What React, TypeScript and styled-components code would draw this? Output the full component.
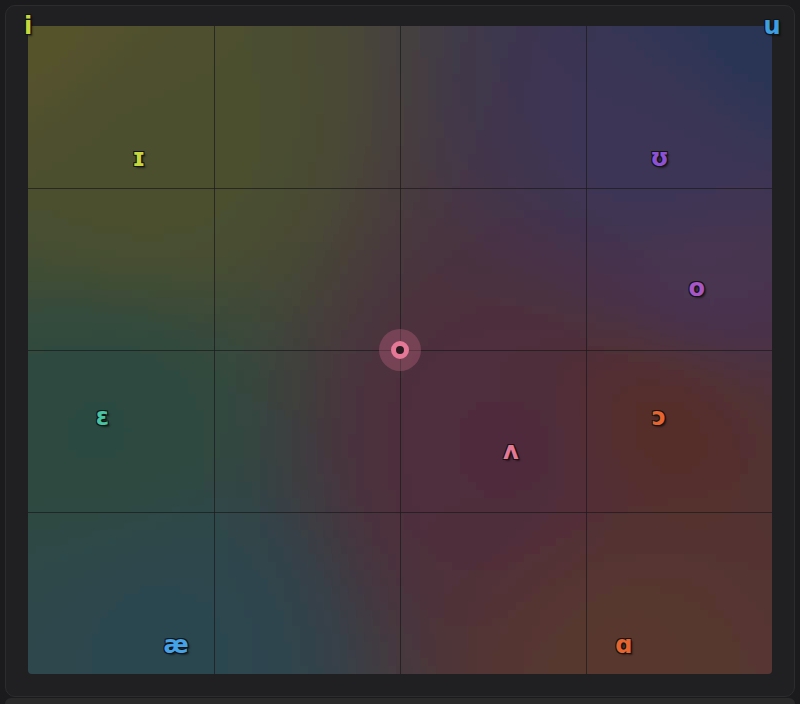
import styled, { createGlobalStyle } from "styled-components";

const GlobalStyle = createGlobalStyle`
  html, body {
    margin: 0;
    background: #1b1b1d;
  }
  body {
    font-family: "DejaVu Sans", "Noto Sans", sans-serif;
  }
`;

const PLOT_W = 744;
const PLOT_H = 648;
const CELL = 8;

type RGB = [number, number, number];

interface Vowel {
  symbol: string;
  x: number;
  y: number;
  color: string;
  tint: RGB;
  pull: number;
}

// positions are fractions of the chart: x = backness, y = openness
const vowels: Vowel[] = [
  { symbol: "i", x: 0, y: 0, color: "#c9d83e", tint: [86, 82, 44], pull: 1 },
  { symbol: "u", x: 1, y: 0, color: "#3d9fe0", tint: [40, 54, 86], pull: 1 },
  { symbol: "ɪ", x: 0.149, y: 0.204, color: "#c8d63e", tint: [76, 80, 46], pull: 1.6 },
  { symbol: "ʊ", x: 0.849, y: 0.204, color: "#8c52d2", tint: [60, 52, 86], pull: 1 },
  { symbol: "o", x: 0.899, y: 0.404, color: "#a855c6", tint: [72, 52, 82], pull: 0.9 },
  { symbol: "ɛ", x: 0.1, y: 0.603, color: "#45c3a2", tint: [44, 74, 64], pull: 1.2 },
  { symbol: "ʌ", x: 0.649, y: 0.656, color: "#e47896", tint: [80, 44, 60], pull: 1.7 },
  { symbol: "ɔ", x: 0.848, y: 0.603, color: "#e8642e", tint: [86, 46, 40], pull: 1 },
  { symbol: "æ", x: 0.199, y: 0.955, color: "#44a2e8", tint: [44, 70, 80], pull: 1.2 },
  { symbol: "ɑ", x: 0.801, y: 0.955, color: "#e8642e", tint: [88, 56, 46], pull: 1 },
];

const blendAt = (px: number, py: number): string => {
  let r = 0;
  let g = 0;
  let b = 0;
  let total = 0;
  for (const v of vowels) {
    const dx = px - v.x * PLOT_W;
    const dy = py - v.y * PLOT_H;
    const w = v.pull / Math.pow(dx * dx + dy * dy + 5000, 1.9);
    r += v.tint[0] * w;
    g += v.tint[1] * w;
    b += v.tint[2] * w;
    total += w;
  }
  return `rgb(${Math.round(r / total)},${Math.round(g / total)},${Math.round(b / total)})`;
};

const buildCells = () => {
  const cells: { x: number; y: number; fill: string }[] = [];
  for (let y = -3 * CELL; y < PLOT_H + 3 * CELL; y += CELL) {
    for (let x = -3 * CELL; x < PLOT_W + 3 * CELL; x += CELL) {
      cells.push({ x, y, fill: blendAt(x + CELL / 2, y + CELL / 2) });
    }
  }
  return cells;
};

const cells = buildCells();

const Page = styled.div`
  padding: 5px 5px 0;
`;

const Panel = styled.div`
  box-sizing: border-box;
  width: 790px;
  height: 692px;
  padding: 20px 22px 22px;
  border: 1px solid #2c2c2f;
  border-radius: 10px;
  background: #202022;
`;

const Plot = styled.div`
  position: relative;
  width: ${PLOT_W}px;
  height: ${PLOT_H}px;
`;

const Field = styled.svg`
  display: block;
  border-radius: 4px;
  overflow: hidden;
`;

const Label = styled.span<{ $color: string }>`
  position: absolute;
  transform: translate(-50%, -50%);
  font-size: 24px;
  font-weight: bold;
  line-height: 1;
  color: ${({ $color }) => $color};
  text-shadow:
    -1px -1px 0 #141414,
    1px -1px 0 #141414,
    -1px 1px 0 #141414,
    1px 1px 0 #141414,
    2px 2px 2px rgba(0, 0, 0, 0.5);
  user-select: none;
`;

const Marker = styled.div`
  position: absolute;
  left: 50%;
  top: 50%;
  width: 42px;
  height: 42px;
  transform: translate(-50%, -50%);
  border-radius: 50%;
  background: rgba(226, 112, 146, 0.28);
  display: flex;
  align-items: center;
  justify-content: center;
`;

const MarkerRing = styled.div`
  box-sizing: border-box;
  width: 18px;
  height: 18px;
  border-radius: 50%;
  border: 5px solid #e47896;
  background: #2a1a20;
`;

const Footer = styled.div`
  margin-top: 1px;
  height: 6px;
  border-radius: 6px 6px 0 0;
  background: #2a2a2b;
`;

const gridLines = [0.25, 0.5, 0.75];

const App = () => (
  <Page>
    <GlobalStyle />
    <Panel>
      <Plot>
        <Field width={PLOT_W} height={PLOT_H} viewBox={`0 0 ${PLOT_W} ${PLOT_H}`}>
          <defs>
            <filter id="soften" x="-5%" y="-5%" width="110%" height="110%">
              <feGaussianBlur stdDeviation="6" />
            </filter>
          </defs>
          <g filter="url(#soften)" shapeRendering="crispEdges">
            {cells.map((c) => (
              <rect key={`${c.x}-${c.y}`} x={c.x} y={c.y} width={CELL} height={CELL} fill={c.fill} />
            ))}
          </g>
          <g stroke="#1c1c1e" strokeOpacity={0.75} strokeWidth={1} shapeRendering="crispEdges">
            {gridLines.map((f) => (
              <line key={`v${f}`} x1={Math.round(f * PLOT_W) + 0.5} y1={0} x2={Math.round(f * PLOT_W) + 0.5} y2={PLOT_H} />
            ))}
            {gridLines.map((f) => (
              <line key={`h${f}`} x1={0} y1={Math.round(f * PLOT_H) + 0.5} x2={PLOT_W} y2={Math.round(f * PLOT_H) + 0.5} />
            ))}
          </g>
        </Field>
        <Marker>
          <MarkerRing />
        </Marker>
        {vowels.map((v) => (
          <Label key={v.symbol} $color={v.color} style={{ left: `${v.x * 100}%`, top: `${v.y * 100}%` }}>
            {v.symbol}
          </Label>
        ))}
      </Plot>
    </Panel>
    <Footer />
  </Page>
);

export default App;
